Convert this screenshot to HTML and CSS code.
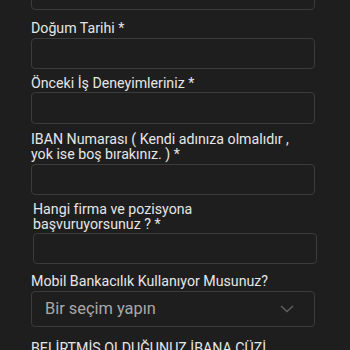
FILE: index.html
```html
<!DOCTYPE html>
<html lang="tr">
<head>
<meta charset="utf-8">
<link rel="stylesheet" href="styles.css">
</head>
<body>
<form class="form">
  <div class="field field-first">
    <input class="input" type="text">
  </div>
  <div class="field f-dogum">
    <label class="label">Doğum Tarihi *</label>
    <input class="input" type="text">
  </div>
  <div class="field f-onceki">
    <label class="label">Önceki İş Deneyimleriniz *</label>
    <input class="input" type="text">
  </div>
  <div class="field f-iban">
    <label class="label">IBAN Numarası ( Kendi adınıza olmalıdır , yok ise boş bırakınız. ) *</label>
    <input class="input" type="text">
  </div>
  <div class="field f-hangi shifted">
    <label class="label">Hangi firma ve pozisyona başvuruyorsunuz ? *</label>
    <input class="input" type="text">
  </div>
  <div class="field f-mobil">
    <label class="label">Mobil Bankacılık Kullanıyor Musunuz?</label>
    <div class="select">
      <span class="select-text">Bir seçim yapın</span>
      <svg class="chevron" width="14" height="8" viewBox="0 0 14 8"><path d="M1 1 L7 6.5 L13 1" fill="none" stroke="#5e5e5e" stroke-width="1.6"/></svg>
    </div>
  </div>
  <div class="field f-last">
    <label class="label caps">BELİRTMİŞ OLDUĞUNUZ İBANA CÜZİ</label>
  </div>
</form>
</body>
</html>
```
FILE: styles.css
```css
html, body {
  margin: 0;
  padding: 0;
  background: #1e1e1e;
  overflow: hidden;
  height: 350px;
}
.form {
  display: flex;
  flex-direction: column;
  width: 284px;
  margin: -21px 0 0 31px;
  font-family: Roboto, "Noto Sans", sans-serif;
  color: #e6e6e6;
}
.field {
  display: flex;
  flex-direction: column;
}
.shifted {
  margin-left: 2px;
}
.label {
  font-size: 14.2px;
  line-height: 14.7px;
  color: #e6e6e6;
  width: 270px;
}
.input {
  box-sizing: border-box;
  height: 31px;
  width: 284px;
  margin: 0;
  background: transparent;
  border: 1.5px solid #3b3b3b;
  border-radius: 4px;
  outline: none;
}
.f-dogum { margin-top: 11px; }
.f-dogum .label { margin-bottom: 2px; }
.f-onceki { margin-top: 7px; }
.f-onceki .label { margin-bottom: 2px; }
.f-onceki .input { height: 32px; }
.f-iban { margin-top: 8px; }
.f-iban .label { margin-bottom: 2px; width: 264px; }
.f-hangi { margin-top: 7px; }
.f-hangi .label { margin-bottom: 2px; width: 190px; }
.f-mobil { margin-top: 10px; }
.f-mobil .label { margin-bottom: 2px; width: 284px; }
.select {
  box-sizing: border-box;
  height: 36px;
  border: 1.5px solid #3b3b3b;
  border-radius: 4px;
  display: flex;
  align-items: center;
  justify-content: space-between;
  padding: 0 20px 0 13px;
}
.select-text {
  font-size: 16.4px;
  color: #a9a9a9;
}
.f-last { margin-top: 14px; }
.caps { width: 300px; }
```
